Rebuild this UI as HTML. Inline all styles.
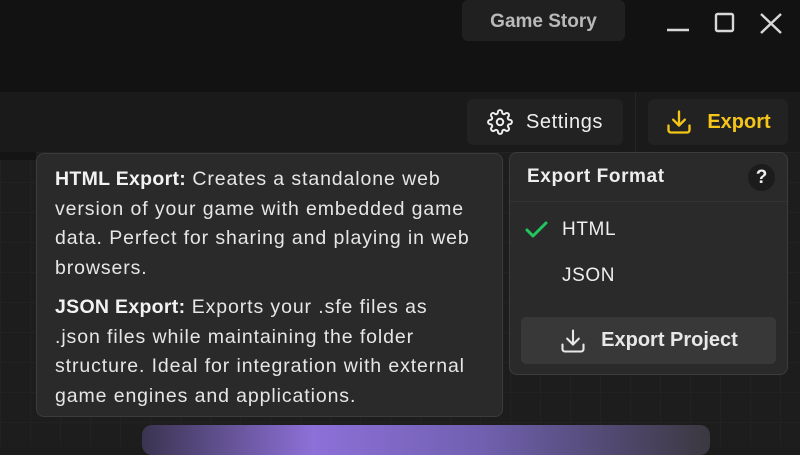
<!DOCTYPE html>
<html><head><meta charset="utf-8"><style>
*{margin:0;padding:0;box-sizing:border-box}
body{width:800px;height:447px;overflow:hidden;background:#1c1c1c;font-family:"Liberation Sans",sans-serif;position:relative;color:#e8e8e8}
.top{position:absolute;left:0;top:0;width:800px;height:92px;background:#121212}
.bar{position:absolute;left:0;top:92px;width:800px;height:60px;background:#1a1a1a}
.canvas{position:absolute;left:0;top:152px;width:800px;height:295px;background-color:#1d1d1d;background-image:linear-gradient(#222 1px,transparent 1px),linear-gradient(90deg,#222 1px,transparent 1px);background-size:30px 30px}
.btn{position:absolute;background:#222;border-radius:6px;display:flex;align-items:center;justify-content:center;font-size:20px}
.tip{position:absolute;left:36px;top:153px;width:467px;height:264px;background:#2a2a2a;border:1px solid #3c3c3c;border-radius:8px;padding:11px 18px;font-size:19.5px;letter-spacing:0.9px;line-height:29.5px;color:#e6e6e6;white-space:nowrap}
.tip b{color:#f2f2f2;letter-spacing:0.3px}
.dd{position:absolute;left:509px;top:152px;width:279px;height:223px;background:#2a2a2a;border:1px solid #3c3c3c;border-radius:8px}
</style></head><body>
<div class="top"></div>
<div class="bar"></div>
<div class="canvas"></div>
<div style="position:absolute;left:0;top:152px;width:36px;height:8px;background:#141414"></div>
<div class="btn" style="left:462px;top:0;width:163px;height:41px;background:#202020;color:#b9b9b9;font-weight:bold;font-size:19px;padding-top:2px">Game Story</div>
<svg style="position:absolute;left:665px;top:10px" width="120" height="26" viewBox="0 0 120 26" fill="none" stroke="#d8d8d8" stroke-width="2.4">
<line x1="2" y1="20" x2="24" y2="20"/><rect x="51" y="4" width="17" height="17" rx="1.5"/><path d="M96 4 L116 23 M116 4 L96 23"/></svg>
<div style="position:absolute;left:635px;top:92px;width:1px;height:60px;background:#252525"></div>
<div class="btn" style="left:467px;top:99px;width:156px;height:46px;color:#eee;letter-spacing:0.6px">
<svg width="26" height="26" viewBox="0 0 24 24" fill="none" stroke="#eee" stroke-width="1.8" stroke-linejoin="round" style="margin-right:13px"><circle cx="12" cy="12" r="3"/><path d="M19.4 15a1.65 1.65 0 0 0 .33 1.820l.06.06a2 2 0 1 1-2.83 2.83l-.06-.06a1.65 1.65 0 0 0-1.820-.33 1.65 1.65 0 0 0-1 1.510V21a2 2 0 0 1-4 0v-.09A1.65 1.65 0 0 0 9 19.4a1.65 1.65 0 0 0-1.820.33l-.06.06a2 2 0 1 1-2.830-2.830l.06-.06a1.65 1.65 0 0 0 .33-1.820 1.65 1.650 0 0 0-1.510-1H3a2 2 0 0 1 0-4h.09A1.65 1.65 0 0 0 4.6 9a1.65 1.65 0 0 0-.33-1.820l-.06-.06a2 2 0 1 1 2.830-2.830l.06.06a1.65 1.65 0 0 0 1.820.33H9a1.65 1.65 0 0 0 1-1.510V3a2 2 0 0 1 4 0v.09a1.65 1.65 0 0 0 1 1.510 1.65 1.65 0 0 0 1.820-.33l.06-.06a2 2 0 1 1 2.830 2.830l-.06.06a1.65 1.65 0 0 0-.33 1.820V9a1.65 1.65 0 0 0 1.510 1H21a2 2 0 0 1 0 4h-.09a1.65 1.65 0 0 0-1.510 1z"/></svg>Settings</div>
<div class="btn" style="left:648px;top:99px;width:140px;height:46px;color:#f5c518;font-weight:bold">
<svg width="28" height="28" viewBox="0 0 24 24" fill="none" stroke="#f5c518" stroke-width="2" stroke-linecap="round" stroke-linejoin="round" style="margin-right:14px"><path d="M3 15v4a2 2 0 0 0 2 2h14a2 2 0 0 0 2-2v-4"/><path d="M7 10l5 5 5-5"/><path d="M12 15V3"/></svg>Export</div>
<div class="tip"><p><b>HTML Export:</b> Creates a standalone web<br>version of your game with embedded game<br>data. Perfect for sharing and playing in web<br>browsers.</p><p style="margin-top:10px"><b>JSON Export:</b> Exports your .sfe files as<br>.json files while maintaining the folder<br>structure. Ideal for integration with external<br>game engines and applications.</p></div>
<div class="dd">
<div style="position:absolute;left:17px;top:13px;font-size:19px;font-weight:bold;color:#eee;letter-spacing:0.6px">Export Format</div>
<div style="position:absolute;left:238px;top:11px;width:27px;height:27px;border-radius:50%;background:#1c1c1c;color:#eee;font-weight:bold;font-size:19px;text-align:center;line-height:27px">?</div>
<div style="position:absolute;left:0;top:48px;width:277px;height:1px;background:#333"></div>
<svg style="position:absolute;left:14px;top:66px" width="26" height="22" viewBox="0 0 26 22" fill="none" stroke="#22c55e" stroke-width="3" stroke-linecap="round" stroke-linejoin="round"><path d="M3 11l6 6L22 4"/></svg>
<div style="position:absolute;left:52px;top:66px;font-size:19px;color:#eee;letter-spacing:0.6px">HTML</div>
<div style="position:absolute;left:52px;top:112px;font-size:19px;color:#eee;letter-spacing:0.6px">JSON</div>
<div style="position:absolute;left:11px;top:164px;width:255px;height:47px;background:#383838;border-radius:5px;display:flex;align-items:center;justify-content:center;font-size:20px;font-weight:bold;color:#e8e8e8">
<svg width="28" height="28" viewBox="0 0 24 24" fill="none" stroke="#e8e8e8" stroke-width="1.8" stroke-linecap="round" stroke-linejoin="round" style="margin-right:14px"><path d="M3 15v4a2 2 0 0 0 2 2h14a2 2 0 0 0 2-2v-4"/><path d="M7 10l5 5 5-5"/><path d="M12 15V3"/></svg>Export Project</div>
</div>
<div style="position:absolute;left:142px;top:425px;width:568px;height:30px;border-radius:10px;background:linear-gradient(90deg,#3a3450,#8d70d8 30%,#7060b0 60%,#3a3840)"></div>
</body></html>
